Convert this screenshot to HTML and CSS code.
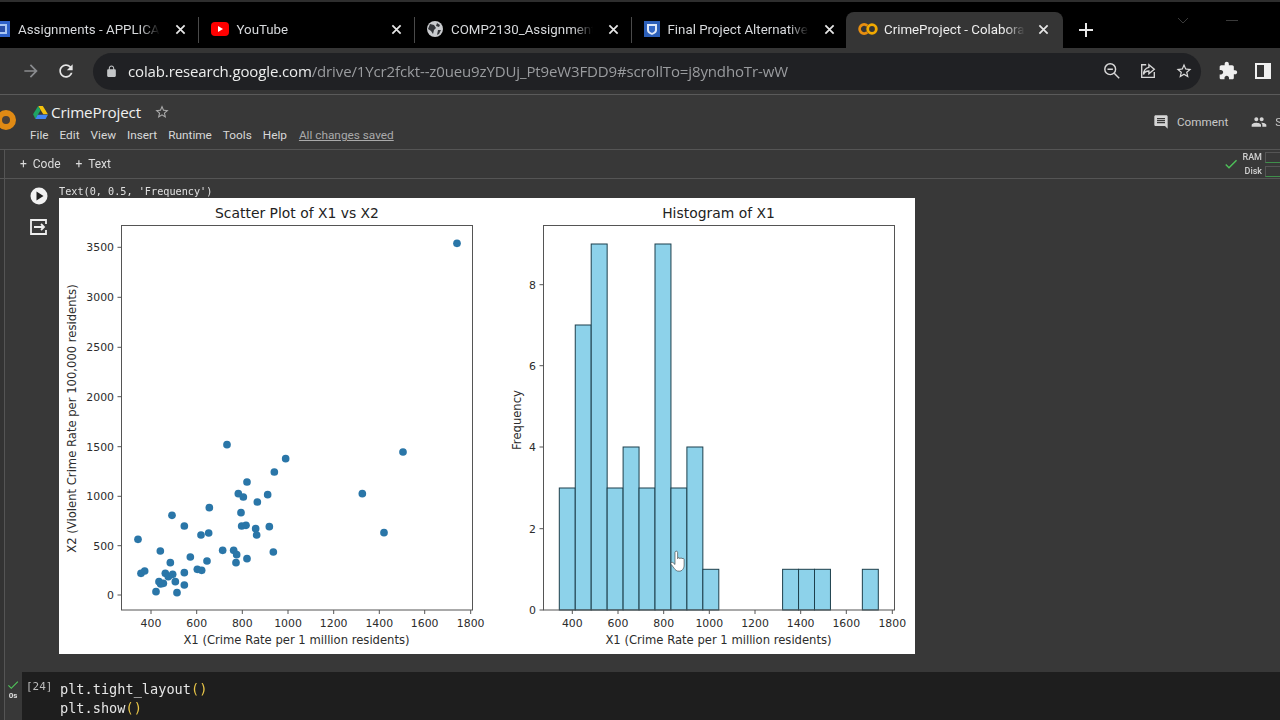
FILE: index.html
```html
<!DOCTYPE html>
<html lang="en">
<head>
<meta charset="utf-8">
<title>CrimeProject - Colaboratory</title>
<link rel="stylesheet" href="styles.css">
</head>
<body>
<svg class="defs" width="0" height="0" aria-hidden="true">
  <symbol id="i-close" viewBox="0 0 12 12"><path d="M1.5 1.5l9 9M10.5 1.5l-9 9" fill="none" stroke="currentColor" stroke-width="1.9"/></symbol>
  <symbol id="i-star" viewBox="0 0 24 24"><path fill="currentColor" d="M22 9.24l-7.19-.62L12 2 9.19 8.63 2 9.24l5.46 4.73L5.82 21 12 17.27 18.18 21l-1.63-7.03L22 9.24zM12 15.4l-3.76 2.27 1-4.28-3.32-2.88 4.38-.38L12 6.1l1.71 4.04 4.38.38-3.32 2.88 1 4.28L12 15.4z"/></symbol>
  <symbol id="i-check" viewBox="0 0 24 24"><path fill="currentColor" d="M9 16.17L4.83 12l-1.42 1.41L9 19 21 7l-1.41-1.41z"/></symbol>
</svg>

<header class="tabstrip">
  <div class="tab">
    <svg class="favicon" viewBox="0 0 16 16"><rect width="16" height="16" fill="#2f62c9"/><rect x="3" y="3" width="10" height="10" fill="#a9c6f2"/><rect x="5" y="5" width="6" height="6" fill="#2a4fa8"/></svg>
    <span class="tab-title">Assignments - APPLICA</span>
    <svg class="tab-close"><use href="#i-close"/></svg>
  </div>
  <div class="tab">
    <svg class="favicon favicon-yt" viewBox="0 0 18 14"><rect width="18" height="14" rx="4" fill="#f00"/><path d="M7 4l5 3-5 3z" fill="#fff"/></svg>
    <span class="tab-title tab-title-full">YouTube</span>
    <svg class="tab-close"><use href="#i-close"/></svg>
  </div>
  <div class="tab">
    <svg class="favicon" viewBox="0 0 16 16"><circle cx="8" cy="8" r="8" fill="#c9cbce"/><path d="M3 3l4 1 2 3-2 2-1 4-2-3-3-2zM10 2l3 2-1 2-3-1zM11 9l3 0-2 4-2 1z" fill="#34363a"/></svg>
    <span class="tab-title">COMP2130_Assignment</span>
    <svg class="tab-close"><use href="#i-close"/></svg>
  </div>
  <div class="tab">
    <svg class="favicon" viewBox="0 0 16 16"><rect width="16" height="16" fill="#2c5fb8"/><path d="M3 3h10v6c0 3-3 4-5 5-2-1-5-2-5-5z" fill="#dfe8f7"/><path d="M5 5h6v4c0 1.5-2 2.5-3 3-1-.5-3-1.500-3-3z" fill="#3568c4"/></svg>
    <span class="tab-title">Final Project Alternative</span>
    <svg class="tab-close"><use href="#i-close"/></svg>
  </div>
  <div class="tab tab-active">
    <svg class="favicon favicon-co" viewBox="0 0 20 12"><circle cx="14" cy="6" r="4.300" fill="none" stroke="#f2a900" stroke-width="2.800"/><path d="M9.300 2.800A4.500 4.500 0 1 0 9.300 9.200" fill="none" stroke="#e88f10" stroke-width="2.800"/></svg>
    <span class="tab-title">CrimeProject - Colabora</span>
    <svg class="tab-close"><use href="#i-close"/></svg>
  </div>
  <svg class="new-tab" viewBox="0 0 14 14"><path d="M7 0v14M0 7h14" stroke="#e8e8e8" stroke-width="2" fill="none"/></svg>
  <div class="window-controls">
    <svg class="win-chevron" viewBox="0 0 12 7"><path d="M1 1l5 5 5-5" fill="none" stroke="#3a3a3a"/></svg>
    <span class="win-min"></span>
  </div>
</header>

<nav class="browserbar">
  <svg class="nav-icon nav-back" viewBox="0 0 24 24"><path fill="#6d6f72" d="M20 11H7.830l5.590-5.590L12 4l-8 8 8 8 1.410-1.410L7.830 13H20z"/></svg>
  <svg class="nav-icon nav-forward" viewBox="0 0 24 24"><path fill="#8a8c8f" d="M12 4l-1.410 1.410L16.170 11H4v2h12.170l-5.580 5.590L12 20l8-8z"/></svg>
  <svg class="nav-icon nav-reload" viewBox="0 0 24 24"><path fill="#e6e6e6" d="M17.650 6.350C16.200 4.900 14.210 4 12 4c-4.420 0-7.990 3.580-7.990 8s3.570 8 7.990 8c3.730 0 6.840-2.550 7.730-6h-2.080c-.82 2.330-3.040 4-5.650 4-3.310 0-6-2.690-6-6s2.690-6 6-6c1.660 0 3.140.69 4.220 1.780L13 11h7V4l-2.350 2.350z"/></svg>
  <div class="omnibox">
    <svg class="lock" viewBox="0 0 24 24"><path fill="#c4c6c8" d="M18 8h-1V6c0-2.760-2.240-5-5-5S7 3.240 7 6v2H6c-1.100 0-2 .9-2 2v10c0 1.100.9 2 2 2h12c1.100 0 2-.9 2-2V10c0-1.100-.9-2-2-2zm-2.900 0H8.900V6c0-1.710 1.390-3.100 3.100-3.100 1.710 0 3.100 1.390 3.100 3.100v2z"/></svg>
    <span class="url"><span class="url-host">colab.research.google.com</span>/drive/1Ycr2fckt--z0ueu9zYDUj_Pt9eW3FDD9#scrollTo=j8yndhoTr-wW</span>
    <div class="omni-actions">
      <svg class="omni-icon" viewBox="0 0 20 20"><circle cx="8" cy="8" r="6" fill="none" stroke="#d8d8d8" stroke-width="1.600"/><path d="M5 8h6M12.500 12.500L18 18" stroke="#d8d8d8" stroke-width="1.600" fill="none"/></svg>
      <svg class="omni-icon" viewBox="0 0 20 20"><path d="M8 3H3v14h14v-6" fill="none" stroke="#d8d8d8" stroke-width="1.500"/><path d="M11 3l6 5-6 5v-3c-3 0-5 1-6 4 0-5 2-7 6-8z" fill="none" stroke="#d8d8d8" stroke-width="1.500"/></svg>
      <svg class="omni-icon omni-star"><use href="#i-star"/></svg>
    </div>
  </div>
  <svg class="ext-icon" viewBox="0 0 24 24"><path fill="#f0f0f0" d="M20.500 11H19V7c0-1.100-.9-2-2-2h-4V3.500C13 2.120 11.880 1 10.500 1S8 2.120 8 3.500V5H4c-1.100 0-1.990.9-1.990 2v3.800H3.500c1.490 0 2.700 1.210 2.700 2.700s-1.210 2.700-2.700 2.700H2V20c0 1.100.9 2 2 2h3.800v-1.500c0-1.490 1.210-2.700 2.700-2.700 1.490 0 2.700 1.210 2.700 2.700V22H17c1.100 0 2-.9 2-2v-4h1.500c1.380 0 2.500-1.120 2.500-2.500S21.880 11 20.500 11z"/></svg>
  <svg class="panel-icon" viewBox="0 0 16 16"><rect x="1" y="1" width="14" height="14" fill="none" stroke="#f0f0f0" stroke-width="2"/><rect x="9" y="1" width="6" height="14" fill="#f0f0f0"/></svg>
</nav>

<div class="app">
  <section class="docbar">
    <svg class="colab-logo" viewBox="0 0 22 22"><circle cx="11" cy="11" r="7" fill="#4a4038" stroke="#e08a14" stroke-width="6"/></svg>
    <div class="docinfo">
      <div class="doctitle">
        <svg class="drive" viewBox="0 0 16 14"><path d="M5.500 0h5L16 9h-5z" fill="#f4c20d"/><path d="M5.500 0L0 9l2.500 5L8 4.500z" fill="#1fa463"/><path d="M5 9.500h11L13.500 14h-11z" fill="#4285f4"/></svg>
        <span class="docname">CrimeProject</span>
        <svg class="doc-star"><use href="#i-star"/></svg>
      </div>
      <div class="menu">
        <span>File</span><span>Edit</span><span>View</span><span>Insert</span><span>Runtime</span><span>Tools</span><span>Help</span><span class="saved">All changes saved</span>
      </div>
    </div>
    <div class="docactions">
      <svg class="doc-action-icon" viewBox="0 0 24 24"><path fill="#d5d5d5" d="M21.990 4c0-1.100-.89-2-1.990-2H4c-1.100 0-2 .9-2 2v12c0 1.100.9 2 2 2h14l4 4-.01-18zM18 14H6v-2h12v2zm0-3H6V9h12v2zm0-3H6V6h12v2z"/></svg>
      <span class="comment-label">Comment</span>
      <svg class="doc-action-icon people" viewBox="0 0 24 24"><path fill="#d5d5d5" d="M16 11c1.660 0 2.990-1.340 2.990-3S17.660 5 16 5c-1.660 0-3 1.340-3 3s1.340 3 3 3zm-8 0c1.660 0 2.990-1.340 2.990-3S9.660 5 8 5C6.340 5 5 6.340 5 8s1.340 3 3 3zm0 2c-2.330 0-7 1.170-7 3.500V19h14v-2.500c0-2.330-4.670-3.500-7-3.500zm8 0c-.29 0-.62.02-.97.05 1.160.84 1.970 1.970 1.970 3.450V19h6v-2.500c0-2.330-4.670-3.500-7-3.500z"/></svg>
      <span class="share-label">S</span>
    </div>
  </section>

  <section class="cellbar">
    <div class="add-buttons"><span>+ Code</span><span>+ Text</span></div>
    <div class="runtime">
      <svg class="runtime-check"><use href="#i-check"/></svg>
      <div class="runtime-labels"><span>RAM</span><span>Disk</span></div>
      <div class="runtime-meters"><span class="meter"></span><span class="meter"></span></div>
    </div>
  </section>

  <main class="notebook">
    <div class="output-cell">
      <div class="gutter">
        <svg class="run" viewBox="0 0 18 18"><circle cx="9" cy="9" r="8.500" fill="#f2f2f2"/><path d="M6.500 4.500l7 4.500-7 4.500z" fill="#222"/></svg>
        <svg class="out-menu" viewBox="0 0 18 16"><path d="M12 1H1v14h11M12 1h4v4M16 11v4h-4" fill="none" stroke="#eee" stroke-width="1.800"/><path d="M4 8h10M11 5l3 3-3 3" fill="none" stroke="#eee" stroke-width="1.800"/></svg>
      </div>
      <div class="output">
        <pre class="out-text">Text(0, 0.5, 'Frequency')</pre>
        <svg class="figure" viewBox="59 198 856 456" width="856" height="456" role="img">
          <rect x="59" y="198" width="856" height="456" fill="#fff"/>
          <text class="title" x="297" y="218" text-anchor="middle">Scatter Plot of X1 vs X2</text>
          <g class="dots" transform="translate(60 400) scale(.33333)">
            <circle cx="234" cy="418" r="11.500"/><circle cx="243" cy="520" r="11.500"/><circle cx="254" cy="513" r="11.500"/><circle cx="288" cy="575" r="11.500"/><circle cx="297" cy="545" r="11.500"/><circle cx="302" cy="552" r="11.500"/><circle cx="310" cy="550" r="11.500"/><circle cx="316" cy="520" r="11.500"/><circle cx="325" cy="530" r="11.500"/><circle cx="338" cy="523" r="11.500"/><circle cx="331" cy="488" r="11.500"/><circle cx="301" cy="453" r="11.500"/><circle cx="336" cy="346" r="11.500"/><circle cx="346" cy="545" r="11.500"/><circle cx="351" cy="578" r="11.500"/><circle cx="373" cy="518" r="11.500"/><circle cx="373" cy="555" r="11.500"/><circle cx="373" cy="378" r="11.500"/><circle cx="391" cy="471" r="11.500"/><circle cx="412" cy="508" r="11.500"/><circle cx="425" cy="511" r="11.500"/><circle cx="423" cy="405" r="11.500"/><circle cx="441" cy="483" r="11.500"/><circle cx="446" cy="399" r="11.500"/><circle cx="448" cy="323" r="11.500"/><circle cx="488" cy="451" r="11.500"/><circle cx="501" cy="134" r="11.500"/><circle cx="521" cy="451" r="11.500"/><circle cx="530" cy="464" r="11.500"/><circle cx="528" cy="488" r="11.500"/><circle cx="561" cy="476" r="11.500"/><circle cx="535" cy="281" r="11.500"/><circle cx="550" cy="291" r="11.500"/><circle cx="561" cy="246" r="11.500"/><circle cx="543" cy="338" r="11.500"/><circle cx="545" cy="378" r="11.500"/><circle cx="558" cy="376" r="11.500"/><circle cx="587" cy="386" r="11.500"/><circle cx="590" cy="405" r="11.500"/><circle cx="592" cy="306" r="11.500"/><circle cx="623" cy="284" r="11.500"/><circle cx="628" cy="380" r="11.500"/><circle cx="640" cy="456" r="11.500"/><circle cx="643" cy="216" r="11.500"/><circle cx="677" cy="176" r="11.500"/><circle cx="907" cy="281" r="11.500"/><circle cx="972" cy="398" r="11.500"/><circle cx="1029" cy="156" r="11.500"/><circle cx="1191" cy="-470" r="11.500"/>
          </g>
          <rect class="frame" x="121.500" y="225.500" width="351" height="384.500"/>
          <path class="ticks" d="M151 610v4M196.700 610v4M242.300 610v4M288 610v4M333.700 610v4M379.300 610v4M424.700 610v4M470.700 610v4M121.500 595h-4M121.500 545.700h-4M121.500 496.300h-4M121.500 446.700h-4M121.500 396.700h-4M121.500 347.300h-4M121.500 297.300h-4M121.500 247.300h-4"/>
          <g class="tick-x">
            <text x="151" y="627">400</text><text x="196.700" y="627">600</text><text x="242.300" y="627">800</text><text x="288" y="627">1000</text><text x="333.700" y="627">1200</text><text x="379.300" y="627">1400</text><text x="424.700" y="627">1600</text><text x="470.700" y="627">1800</text>
          </g>
          <g class="tick-y">
            <text x="114" y="599">0</text><text x="114" y="549.700">500</text><text x="114" y="500.300">1000</text><text x="114" y="450.700">1500</text><text x="114" y="400.700">2000</text><text x="114" y="351.300">2500</text><text x="114" y="301.300">3000</text><text x="114" y="251.300">3500</text>
          </g>
          <text class="label" x="296.500" y="644" text-anchor="middle">X1 (Crime Rate per 1 million residents)</text>
          <text class="label" x="0" y="0" text-anchor="middle" transform="translate(76 418.500) rotate(-90)">X2 (Violent Crime Rate per 100,000 residents)</text>

          <text class="title" x="718.500" y="218" text-anchor="middle">Histogram of X1</text>
          <g class="bars">
            <rect x="559.300" y="488" width="15.950" height="122"/><rect x="575.250" y="325" width="15.950" height="285"/><rect x="591.200" y="244" width="15.950" height="366"/><rect x="607.150" y="488" width="15.950" height="122"/><rect x="623.100" y="447" width="15.950" height="163"/><rect x="639.050" y="488" width="15.950" height="122"/><rect x="655" y="244" width="15.950" height="366"/><rect x="670.950" y="488" width="15.950" height="122"/><rect x="686.900" y="447" width="15.950" height="163"/><rect x="702.850" y="569.300" width="15.950" height="40.700"/><rect x="782.600" y="569.300" width="15.950" height="40.700"/><rect x="798.550" y="569.300" width="15.950" height="40.700"/><rect x="814.500" y="569.300" width="15.950" height="40.700"/><rect x="862.350" y="569.300" width="15.950" height="40.700"/>
          </g>
          <rect class="frame" x="543.500" y="225.500" width="351" height="384.500"/>
          <path class="ticks" d="M572.300 610v4M618 610v4M663.700 610v4M709.300 610v4M755 610v4M800.700 610v4M846.300 610v4M892.300 610v4M543.500 610h-4M543.500 528.700h-4M543.500 447h-4M543.500 365.700h-4M543.500 284.700h-4"/>
          <g class="tick-x">
            <text x="572.300" y="627">400</text><text x="618" y="627">600</text><text x="663.700" y="627">800</text><text x="709.300" y="627">1000</text><text x="755" y="627">1200</text><text x="800.700" y="627">1400</text><text x="846.300" y="627">1600</text><text x="892.300" y="627">1800</text>
          </g>
          <g class="tick-y">
            <text x="536" y="614">0</text><text x="536" y="532.700">2</text><text x="536" y="451">4</text><text x="536" y="369.700">6</text><text x="536" y="288.700">8</text>
          </g>
          <text class="label" x="718.500" y="644" text-anchor="middle">X1 (Crime Rate per 1 million residents)</text>
          <text class="label" x="0" y="0" text-anchor="middle" transform="translate(521 420) rotate(-90)">Frequency</text>

          <path class="cursor" d="M675 552.500c0-1.800 2.600-1.800 2.600 0v6.200c.3-1.600 2.300-1.300 2.300 0 .3-1.300 2.200-1.100 2.200.3.400-1 2-.7 2 .6v5.400c0 3.600-2 6.200-5 6.200-2.500 0-3.800-1.200-5-3l-3-4c-.8-1.300.9-2.600 2-1.500l1.900 1.800z"/>
        </svg>
      </div>
    </div>

    <div class="code-row">
      <div class="code-status">
        <svg class="status-check"><use href="#i-check"/></svg>
        <span class="status-time">0s</span>
      </div>
      <div class="code-cell">
        <span class="exec-count">[24]</span>
        <pre class="code">plt.tight_layout<span class="paren">()</span>
plt.show<span class="paren">()</span></pre>
      </div>
    </div>
  </main>
</div>
</body>
</html>
```

FILE: styles.css
```css
* { box-sizing: border-box; }

html, body {
  margin: 0;
  height: 720px;
  overflow: hidden;
  background: #383838;
  color: #e3e3e3;
  font-family: Roboto, "Liberation Sans", sans-serif;
}

.defs { display: block; height: 0; }

.tabstrip, .browserbar, .app { filter: blur(0.35px); }

/* Browser tab strip */
.tabstrip {
  display: flex;
  align-items: flex-end;
  height: 48px;
  padding-top: 2px;
  margin-left: -18px;
  width: 1298px;
  background: #000;
  border-top: 2px solid #2e2e2e;
}

.tab {
  flex: 0 0 216.5px;
  min-width: 0;
  height: 36px;
  display: flex;
  align-items: center;
  gap: 8px;
  padding: 0 12px 2px 12px;
  font-family: Roboto, sans-serif;
  font-size: 13.3px;
  color: #d7d9dc;
  border-right: 1px solid #3c3c3c;
  border-image: linear-gradient(#000 15%, #4a4a4a 15%, #4a4a4a 85%, #000 85%) 1;
}

.tab-active {
  background: #353535;
  border: 0;
  border-radius: 8px 8px 0 0;
  margin-left: -2px;
  padding-right: 14px;
  gap: 6px;
  color: #eee;
}

.favicon { width: 16px; height: 16px; flex: none; }
.favicon-yt { width: 18px; height: 14px; }
.favicon-co { width: 20px; height: 12px; }

.tab-title {
  flex: 1;
  min-width: 0;
  white-space: nowrap;
  -webkit-mask-image: linear-gradient(90deg, #000 86%, transparent 100%);
  mask-image: linear-gradient(90deg, #000 86%, transparent 100%);
}
.tab-title-full { -webkit-mask-image: none; mask-image: none; }

.tab-close { width: 11px; height: 11px; flex: none; margin-left: 7px; color: #e6e6e6; }

.new-tab { width: 14px; height: 14px; margin: 0 0 11px 16px; flex: none; }

.window-controls {
  display: flex;
  align-items: center;
  gap: 37px;
  margin: 0 0 24px 84px;
}
.win-chevron { width: 12px; height: 7px; }
.win-min { width: 12px; height: 1px; background: #3a3a3a; }

/* Address bar */
.browserbar {
  height: 47px;
  display: flex;
  align-items: center;
  background: #353535;
  border-bottom: 1px solid #5a5a5a;
}
.nav-icon { width: 20px; height: 20px; flex: none; }
.nav-back { margin-left: -18px; }
.nav-forward { margin-left: 19px; }
.nav-reload { margin-left: 15px; }

.omnibox {
  flex: 0 0 1108px;
  height: 37px;
  margin-left: 17px;
  display: flex;
  align-items: center;
  padding: 0 8px 0 12px;
  border-radius: 19px;
  background: #202124;
}
.lock { width: 13px; height: 13px; flex: none; }
.url {
  margin-left: 10px;
  font-family: "Open Sans", sans-serif;
  font-size: 15px;
  letter-spacing: -0.13px;
  color: #9a9c9f;
  white-space: nowrap;
}
.url-host { color: #eceded; }
.omni-actions { margin-left: auto; display: flex; align-items: center; gap: 18px; }
.omni-icon { width: 18px; height: 18px; flex: none; }
.omni-star { color: #dcdcdc; }
.ext-icon { width: 20px; height: 20px; margin-left: 17px; flex: none; }
.panel-icon { width: 16px; height: 16px; margin-left: 17px; flex: none; }

/* Colab document header */
.docbar {
  height: 55px;
  display: flex;
  background: #383838;
  border-bottom: 1px solid #555;
}
.colab-logo { width: 22px; height: 22px; flex: none; margin: 14px 0 0 -5px; }
.docinfo { margin-left: 13px; display: flex; flex-direction: column; }
.doctitle { display: flex; align-items: center; height: 22px; margin-top: 6px; padding-left: 3px; }
.drive { width: 15px; height: 13px; flex: none; margin-right: 3px; }
.docname { font-size: 15.2px; letter-spacing: -0.15px; color: #f0f0f0; font-family: "Open Sans", sans-serif; }
.doc-star { width: 16px; height: 16px; margin-left: 13px; color: #aaa; }

.menu {
  display: flex;
  gap: 11px;
  margin-top: 5px;
  font-size: 11.8px;
  color: #d8d8d8;
}
.saved { color: #aaa; text-decoration: underline; margin-left: 1px; }

.docactions {
  margin-left: auto;
  height: 54px;
  display: flex;
  align-items: center;
  font-size: 11.7px;
  color: #c8c8c8;
  white-space: nowrap;
  width: 127px;
  flex: none;
}
.doc-action-icon { width: 16px; height: 16px; flex: none; }
.comment-label { margin-left: 8px; }
.people { margin-left: 23px; }
.share-label { margin-left: 8px; }

/* Notebook tool row */
.cellbar {
  height: 29px;
  display: flex;
  align-items: center;
  justify-content: space-between;
  border-bottom: 1px solid #555;
  background: linear-gradient(90deg, #333 0 4px, #555 4px 5px, transparent 5px);
}
.add-buttons { display: flex; gap: 15px; padding-left: 20px; font-size: 12px; word-spacing: 3px; color: #dcdcdc; }
.runtime { display: flex; align-items: center; width: 57px; flex: none; }
.runtime-check { width: 16px; height: 16px; color: #4fc35a; flex: none; margin-right: 4px; }
.runtime-labels {
  display: flex;
  flex-direction: column;
  align-items: flex-end;
  gap: 3px;
  width: 19px;
  flex: none;
  font-size: 9px;
  line-height: 11px;
  font-weight: 500;
  color: #d0d0d0;
}
.runtime-meters { display: flex; flex-direction: column; gap: 3px; margin-left: 3px; }
.meter { display: block; width: 20px; height: 11px; border: 1px solid #555; border-bottom-color: #3f8f4b; }

/* Notebook body */
.notebook {
  display: flex;
  flex-direction: column;
  height: 541px;
  background: linear-gradient(90deg, #333 0 4px, #555 4px 5px, transparent 5px);
}
.output-cell { display: flex; }
.gutter {
  width: 59px;
  flex: none;
  display: flex;
  flex-direction: column;
  align-items: center;
  padding: 8px 0 0 18px;
  gap: 14px;
}
.run { width: 18px; height: 18px; }
.out-menu { width: 18px; height: 16px; }

.out-text {
  margin: 0;
  height: 19px;
  padding-top: 6px;
  font-family: "DejaVu Sans Mono", monospace;
  font-size: 10.2px;
  line-height: 13px;
  color: #e0e0e0;
}
.figure { display: block; }

.title { font-family: "DejaVu Sans", sans-serif; font-size: 13.9px; fill: #222; }
.label { font-family: "DejaVu Sans", sans-serif; font-size: 11.6px; fill: #2c2c2c; }
.tick-x text { font-family: "DejaVu Sans", sans-serif; font-size: 10.9px; fill: #2c2c2c; text-anchor: middle; }
.tick-y text { font-family: "DejaVu Sans", sans-serif; font-size: 10.9px; fill: #2c2c2c; text-anchor: end; }
.frame { fill: none; stroke: #555; stroke-width: 1; }
.ticks { fill: none; stroke: #555; stroke-width: 1; }
.dots circle { fill: #2a76a8; }
.bars rect { fill: #8dd2ea; stroke: #1d3f4c; stroke-width: 1; }
.cursor { fill: #fff; stroke: #333; stroke-width: .6; }

/* Code cell */
.code-row { display: flex; margin-top: 18px; }
.code-status {
  width: 22px;
  flex: none;
  display: flex;
  flex-direction: column;
  align-items: center;
  padding: 6px 0 0 4px;
}
.status-check { width: 14px; height: 14px; color: #4fc35a; }
.status-time { font-size: 8px; line-height: 8px; font-weight: 700; color: #ddd; }
.code-cell {
  flex: 1;
  height: 48px;
  display: flex;
  background: #1e1e1e;
  padding: 8px 0 0 4px;
}
.exec-count { width: 34px; flex: none; font-family: "DejaVu Sans Mono", monospace; font-size: 11px; line-height: 14px; color: #bdbdbd; }
.code {
  margin: 0;
  font-family: "DejaVu Sans Mono", monospace;
  font-size: 13.6px;
  line-height: 19px;
  color: #e6e6e6;
}
.paren { color: #e8c547; }
```
